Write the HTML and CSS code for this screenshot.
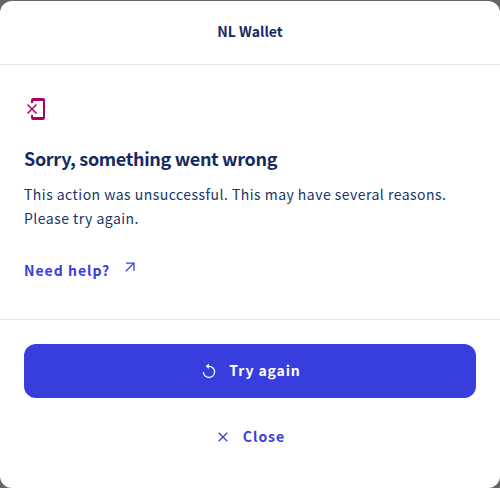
FILE: index.html
```html
<!DOCTYPE html>
<html lang="en">
<head>
<meta charset="utf-8">
<title>NL Wallet</title>
<link rel="stylesheet" href="styles.css">
</head>
<body>
<main class="modal">
  <header class="header"><span class="brand">NL Wallet</span></header>
  <section class="content">
    <svg class="device-icon" width="24" height="24" viewBox="0 0 24 24" fill="none" stroke="currentColor">
      <path d="M8 6V3.2Q8 2 9.2 2H18.8Q20 2 20 3.2V20.8Q20 22 18.8 22H9.2Q8 22 8 20.8V18" stroke-width="2"/>
      <path d="M8.5 2.5H19.5M8.5 21.5H19.5" stroke-width="3"/>
      <path d="M3.5 7.5L12.5 16.5M12.5 7.5L3.5 16.5" stroke-width="1.5"/>
    </svg>
    <h1 class="title">Sorry, something went wrong</h1>
    <p class="text">This action was unsuccessful. This may have several reasons.<br>Please try again.</p>
    <a class="help" href="#"><span>Need help?</span>
      <svg class="arrow" width="12" height="12" viewBox="0 0 12 12" fill="none" stroke="currentColor" stroke-width="1.3"><path d="M2 2.1H10V10M10 2.1L1.8 10.2"/></svg>
    </a>
  </section>
  <footer class="footer">
    <button class="button primary">
      <svg width="16" height="16" viewBox="0 0 16 16" fill="none" stroke="currentColor" stroke-width="1.3"><path d="M2.4 8.9A5.6 5.6 0 1 0 8 3.3H5.8"/><path d="M7.8 .5V6.1L4.8 3.3Z" fill="currentColor" stroke="none"/></svg>
      <span class="label">Try again</span>
    </button>
    <button class="button secondary">
      <svg width="16" height="16" viewBox="0 0 16 16" fill="none" stroke="currentColor" stroke-width="1.3"><path d="M3.7 3.7L12.3 12.3M12.3 3.7L3.7 12.3"/></svg>
      <span class="label">Close</span>
    </button>
  </footer>
</main>
</body>
</html>
```
FILE: styles.css
```css
* { box-sizing: border-box; }
body {
  margin: 0;
  padding-top: 1px;
  height: 488px;
  overflow: hidden;
  background: #666;
  color: #152a62;
  font-family: "Noto Sans CJK SC", "Noto Sans", sans-serif;
}
.modal { height: 487px; background: #fff; border-radius: 12px; overflow: hidden; }
.header {
  height: 64px;
  padding-bottom: 3px;
  border-bottom: 1px solid #e8e8e8;
  display: flex;
  align-items: center;
  justify-content: center;
}
.brand { font-size: 14px; line-height: 24px; font-weight: 700; white-space: nowrap; }
.content { height: 255px; padding: 32px 24px 0; border-bottom: 1px solid #e8e8e8; }
.device-icon { display: block; color: #a90061; }
.title { margin: 23px 0 0; font-size: 18px; line-height: 28px; font-weight: 700; white-space: nowrap; letter-spacing: -.33px; }
.text { margin: 10px 0 0; color: #20346a; font-size: 14px; line-height: 24px; white-space: nowrap; letter-spacing: .47px; }
.help {
  display: flex;
  width: max-content;
  gap: 14px;
  margin-top: 28px;
  color: #383ede;
  font-size: 14px;
  line-height: 24px;
  font-weight: 700;
  letter-spacing: 1px;
  text-decoration: none;
}
.arrow { margin-top: 3px; }
.footer { padding: 24px 24px 0; }
.button {
  display: flex;
  align-items: center;
  justify-content: center;
  gap: 12px;
  width: 100%;
  border: 0;
  padding: 0;
  font: inherit;
  font-size: 14px;
  line-height: 24px;
  font-weight: 700;
  letter-spacing: 1px;
}
.label { padding-bottom: 2px; }
.primary { height: 54px; padding-left: 2px; border-radius: 12px; background: #383ede; color: #fff; letter-spacing: .88px; }
.secondary { height: 54px; margin-top: 12px; background: none; color: #383ede; }
```
